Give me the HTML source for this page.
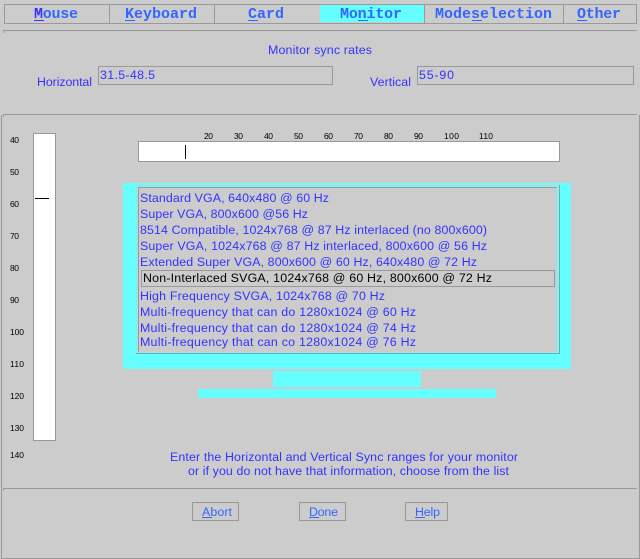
<!DOCTYPE html>
<html><head><meta charset="utf-8"><style>
html,body{margin:0;padding:0;background:#ccc;width:640px;height:559px;overflow:hidden}
svg{display:block}
text{font-family:"Liberation Sans",sans-serif;font-size:12.4px;fill:#33f;white-space:pre}
.tab{font-family:"Liberation Mono",monospace;font-size:15px;font-weight:bold;fill:#36f}
.btn{fill:#36f}
.s{font-size:8.5px;fill:#000}
</style></head><body>
<svg width="640" height="559" viewBox="0 0 640 559" xmlns="http://www.w3.org/2000/svg" shape-rendering="crispEdges">
<rect width="640" height="559" fill="#ccc"/>
<!-- window frame -->
<rect x="1" y="115" width="1" height="444" fill="#999"/>
<rect x="639" y="115" width="1" height="444" fill="#999"/>
<rect x="1" y="558" width="639" height="1" fill="#999"/>
<!-- tabs -->
<rect x="320" y="5" width="104" height="17" fill="#6ff"/>
<rect x="4.5" y="4.5" width="632" height="19" fill="none" stroke="#999"/>
<rect x="109" y="4" width="1" height="19" fill="#999"/>
<rect x="214" y="4" width="1" height="19" fill="#999"/>
<rect x="424" y="4" width="1" height="19" fill="#999"/>
<rect x="563" y="4" width="1" height="19" fill="#999"/>
<text class="tab" x="34" y="18" textLength="44"><tspan fill="#33f">M</tspan>ouse</text>
<text class="tab" x="125" y="18" textLength="72">Keyboard</text>
<text class="tab" x="248" y="18" textLength="36">Card</text>
<text class="tab" x="340" y="18" textLength="62">Monitor</text>
<text class="tab" x="435" y="18" textLength="117">Modeselection</text>
<text class="tab" x="577" y="18" textLength="44">Other</text>
<rect x="34" y="20" width="10" height="1" fill="#33f"/>
<rect x="125" y="20" width="10" height="1" fill="#36f"/>
<rect x="248" y="20" width="10" height="1" fill="#36f"/>
<rect x="358" y="20" width="10" height="1" fill="#36f"/>
<rect x="472" y="20" width="10" height="1" fill="#36f"/>
<rect x="577" y="20" width="10" height="1" fill="#36f"/>
<!-- rules -->
<rect x="3" y="30" width="634" height="1" fill="#999"/><rect x="3" y="30" width="1" height="3" fill="#999"/>
<rect x="3" y="114" width="634" height="1" fill="#999"/><rect x="3" y="114" width="1" height="3" fill="#999"/>
<rect x="3" y="488" width="634" height="1" fill="#999"/><rect x="3" y="488" width="1" height="3" fill="#999"/>
<!-- sync -->
<text x="268" y="54" textLength="104">Monitor sync rates</text>
<text x="37" y="86" textLength="55">Horizontal</text>
<rect x="98.5" y="66.5" width="234" height="18" fill="none" stroke="#999"/>
<text x="100" y="79" textLength="55">31.5-48.5</text>
<text x="370" y="86" textLength="41">Vertical</text>
<rect x="417.5" y="66.5" width="216" height="18" fill="none" stroke="#999"/>
<text x="419" y="79" textLength="35">55-90</text>
<!-- vertical scale -->
<rect x="33.5" y="133.5" width="22" height="307" fill="#fff" stroke="#999"/>
<rect x="35" y="198" width="14" height="1" fill="#000"/>
<text class="s" x="10" y="143" textLength="9">40</text>
<text class="s" x="10" y="175" textLength="9">50</text>
<text class="s" x="10" y="207" textLength="9">60</text>
<text class="s" x="10" y="239" textLength="9">70</text>
<text class="s" x="10" y="271" textLength="9">80</text>
<text class="s" x="10" y="303" textLength="9">90</text>
<text class="s" x="10" y="335" textLength="14">100</text>
<text class="s" x="10" y="367" textLength="14">110</text>
<text class="s" x="10" y="399" textLength="14">120</text>
<text class="s" x="10" y="431" textLength="14">130</text>
<text class="s" x="10" y="458" textLength="14">140</text>
<!-- horizontal scale -->
<rect x="138.5" y="141.5" width="421" height="20" fill="#fff" stroke="#999"/>
<rect x="185" y="145" width="1" height="14" fill="#000"/>
<text class="s" x="204" y="139" textLength="9">20</text>
<text class="s" x="234" y="139" textLength="9">30</text>
<text class="s" x="264" y="139" textLength="9">40</text>
<text class="s" x="294" y="139" textLength="9">50</text>
<text class="s" x="324" y="139" textLength="9">60</text>
<text class="s" x="354" y="139" textLength="9">70</text>
<text class="s" x="384" y="139" textLength="9">80</text>
<text class="s" x="414" y="139" textLength="9">90</text>
<text class="s" x="444" y="139" textLength="15">100</text>
<text class="s" x="479" y="139" textLength="14">110</text>
<!-- monitor -->
<rect x="123" y="183" width="448" height="186" fill="#6ff"/>
<rect x="136" y="185" width="424" height="1" fill="#ccc"/>
<rect x="136" y="185" width="1" height="169" fill="#ccc"/>
<rect x="559" y="185" width="1" height="169" fill="#999"/>
<rect x="136" y="353" width="424" height="1" fill="#999"/>
<rect x="138" y="187" width="419" height="165" fill="#ccc"/>
<rect x="138" y="187" width="419" height="1" fill="#999"/>
<rect x="138" y="187" width="1" height="165" fill="#999"/>
<rect x="273" y="371" width="148" height="16" fill="#6ff"/>
<rect x="198" y="389" width="298" height="9" fill="#6ff"/>
<!-- list -->
<text x="140" y="202" textLength="189">Standard VGA, 640x480 @ 60 Hz</text>
<text x="140" y="218" textLength="168">Super VGA, 800x600 @56 Hz</text>
<text x="140" y="234" textLength="347">8514 Compatible, 1024x768 @ 87 Hz interlaced (no 800x600)</text>
<text x="140" y="250" textLength="347">Super VGA, 1024x768 @ 87 Hz interlaced, 800x600 @ 56 Hz</text>
<text x="140" y="266" textLength="337">Extended Super VGA, 800x600 @ 60 Hz, 640x480 @ 72 Hz</text>
<rect x="141.5" y="270.5" width="413" height="16" fill="none" stroke="#999"/>
<text x="143" y="282" textLength="349" style="fill:#000">Non-Interlaced SVGA, 1024x768 @ 60 Hz, 800x600 @ 72 Hz</text>
<text x="140" y="300" textLength="245">High Frequency SVGA, 1024x768 @ 70 Hz</text>
<text x="140" y="316" textLength="276">Multi-frequency that can do 1280x1024 @ 60 Hz</text>
<text x="140" y="332" textLength="276">Multi-frequency that can do 1280x1024 @ 74 Hz</text>
<text x="140" y="346" textLength="276">Multi-frequency that can co 1280x1024 @ 76 Hz</text>
<!-- instructions -->
<text x="170" y="461" textLength="348">Enter the Horizontal and Vertical Sync ranges for your monitor</text>
<text x="188" y="475" textLength="321">or if you do not have that information, choose from the list</text>
<!-- buttons -->
<rect x="192.5" y="502.5" width="46" height="18" fill="none" stroke="#999"/>
<text class="btn" x="202" y="516" textLength="30">Abort</text>
<rect x="202" y="517" width="10" height="1" fill="#36f"/>
<rect x="299.5" y="502.5" width="46" height="18" fill="none" stroke="#999"/>
<text class="btn" x="309" y="516" textLength="29">Done</text>
<rect x="309" y="517" width="10" height="1" fill="#36f"/>
<rect x="405.5" y="502.5" width="42" height="18" fill="none" stroke="#999"/>
<text class="btn" x="415" y="516" textLength="25">Help</text>
<rect x="415" y="517" width="10" height="1" fill="#36f"/>
</svg>
</body></html>
